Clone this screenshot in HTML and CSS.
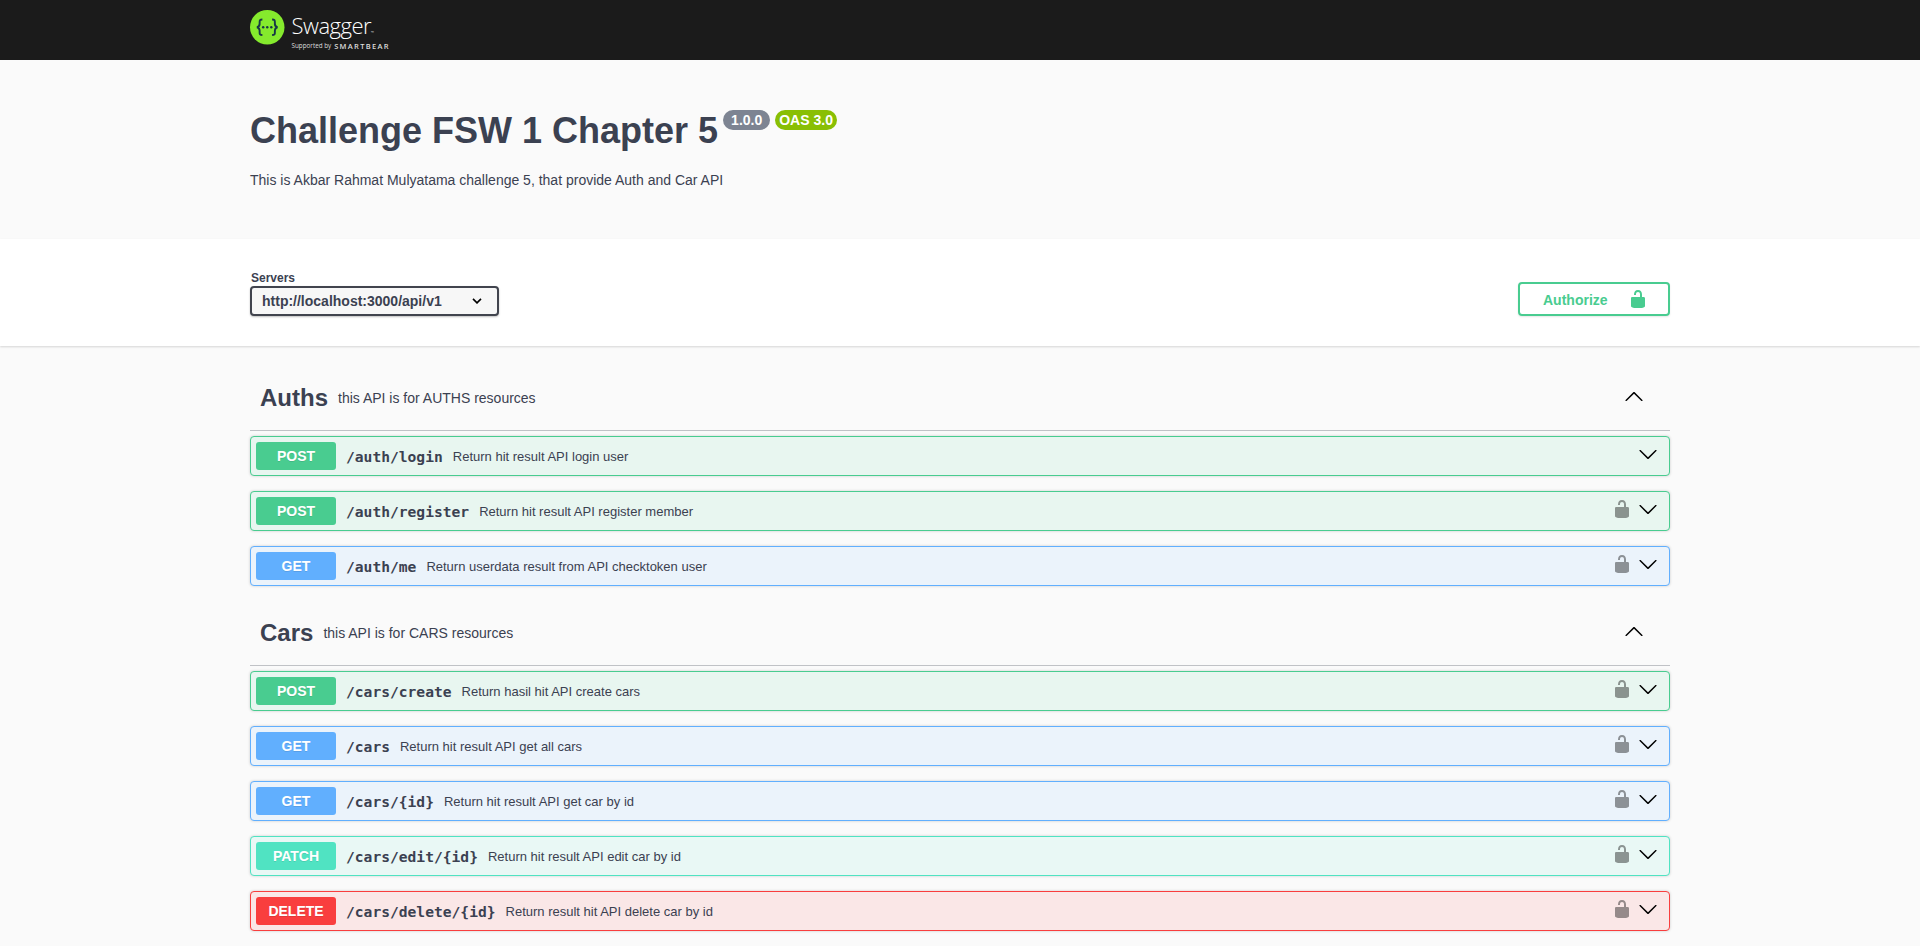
FILE: index.html
```html
<!DOCTYPE html>
<html lang="en">
<head>
<meta charset="utf-8">
<title>Swagger UI</title>
<link rel="stylesheet" href="styles.css">
</head>
<body>
<svg class="defs" width="0" height="0">
  <symbol id="unlocked" viewBox="0 0 20 20"><path d="M15.8 8H14V5.6C14 2.703 12.665 1 10 1 7.334 1 6 2.703 6 5.6V6h2v-.801C8 3.754 8.797 3 10 3c1.203 0 2 .754 2 2.199V8H4c-.553 0-1 .646-1 1.199V17c0 .549.428 1.139.951 1.307l1.197.387C5.672 18.861 6.55 19 7.1 19h5.8c.549 0 1.428-.139 1.951-.307l1.196-.387c.524-.167.953-.757.953-1.306V9.199C17 8.646 16.352 8 15.8 8z"/></symbol>
  <symbol id="arrow-down" viewBox="0 0 20 20"><path d="M17.418 6.109c.272-.268.709-.268.979 0s.271.701 0 .969l-7.908 7.83c-.27.268-.707.268-.979 0l-7.908-7.83c-.27-.268-.27-.701 0-.969.271-.268.709-.268.979 0L10 13.25l7.418-7.141z"/></symbol>
  <symbol id="arrow-up" viewBox="0 0 20 20"><path d="M17.418 14.908c.272.268.709.268.979 0s.271-.701 0-.969l-7.908-7.83c-.27-.268-.707-.268-.979 0l-7.908 7.83c-.27.268-.27.701 0 .969.271.268.709.268.979 0L10 7.767l7.418 7.141z"/></symbol>
</svg>
<header class="topbar">
  <div class="wrapper brand">
    <svg class="logo" viewBox="0 0 34 34">
      <circle cx="17" cy="17" r="17" fill="#85ea2d"/>
      <g fill="none" stroke="#173647" stroke-width="1.9">
        <path d="M12.2 9.400c-2.400 0-2.800.8-2.700 2.700.2 2.700.1 4.400-2.700 4.900 2.800.5 2.900 2.200 2.700 4.900-.1 1.900.3 2.700 2.700 2.700"/>
        <path d="M21.800 9.400c2.400 0 2.800.8 2.700 2.700-.2 2.700-.1 4.400 2.700 4.900-2.800.5-2.900 2.200-2.700 4.900.1 1.900-.3 2.700-2.700 2.700"/>
      </g>
      <g fill="#173647"><circle cx="13" cy="17" r="1.200"/><circle cx="17" cy="17" r="1.200"/><circle cx="21" cy="17" r="1.200"/></g>
    </svg>
    <div class="wordmark">
      <div class="name">Swagger<span class="tm">™</span></div>
      <div class="support">Supported by <b>SMARTBEAR</b></div>
    </div>
  </div>
</header>
<section class="wrapper info">
  <h1>Challenge FSW 1 Chapter 5 <span class="badges"><span class="badge">1.0.0</span><span class="badge oas">OAS 3.0</span></span></h1>
  <p>This is Akbar Rahmat Mulyatama challenge 5, that provide Auth and Car API</p>
</section>
<section class="schemes">
  <div class="wrapper scheme-row">
    <div>
      <div class="servers-label">Servers</div>
      <div class="select"><span>http://localhost:3000/api/v1</span><svg width="10" height="6" viewBox="0 0 10 6"><path d="M1 .9l4 4 4-4" fill="none" stroke="#000" stroke-width="1.600"/></svg></div>
    </div>
    <button class="authorize"><span>Authorize</span><svg class="lock"><use href="#unlocked"/></svg></button>
  </div>
</section>
<main class="wrapper">
  <section class="tag">
    <h3><span>Auths</span><small>this API is for AUTHS resources</small><svg class="arrow"><use href="#arrow-up"/></svg></h3>
    <div class="op post"><span class="method">POST</span><code>/auth/login</code><span class="desc">Return hit result API login user</span><svg class="arrow"><use href="#arrow-down"/></svg></div>
    <div class="op post"><span class="method">POST</span><code>/auth/register</code><span class="desc">Return hit result API register member</span><svg class="lock"><use href="#unlocked"/></svg><svg class="arrow"><use href="#arrow-down"/></svg></div>
    <div class="op get"><span class="method">GET</span><code>/auth/me</code><span class="desc">Return userdata result from API checktoken user</span><svg class="lock"><use href="#unlocked"/></svg><svg class="arrow"><use href="#arrow-down"/></svg></div>
  </section>
  <section class="tag">
    <h3><span>Cars</span><small>this API is for CARS resources</small><svg class="arrow"><use href="#arrow-up"/></svg></h3>
    <div class="op post"><span class="method">POST</span><code>/cars/create</code><span class="desc">Return hasil hit API create cars</span><svg class="lock"><use href="#unlocked"/></svg><svg class="arrow"><use href="#arrow-down"/></svg></div>
    <div class="op get"><span class="method">GET</span><code>/cars</code><span class="desc">Return hit result API get all cars</span><svg class="lock"><use href="#unlocked"/></svg><svg class="arrow"><use href="#arrow-down"/></svg></div>
    <div class="op get"><span class="method">GET</span><code>/cars/{id}</code><span class="desc">Return hit result API get car by id</span><svg class="lock"><use href="#unlocked"/></svg><svg class="arrow"><use href="#arrow-down"/></svg></div>
    <div class="op patch"><span class="method">PATCH</span><code>/cars/edit/{id}</code><span class="desc">Return hit result API edit car by id</span><svg class="lock"><use href="#unlocked"/></svg><svg class="arrow"><use href="#arrow-down"/></svg></div>
    <div class="op delete"><span class="method">DELETE</span><code>/cars/delete/{id}</code><span class="desc">Return result hit API delete car by id</span><svg class="lock"><use href="#unlocked"/></svg><svg class="arrow"><use href="#arrow-down"/></svg></div>
  </section>
</main>
</body>
</html>
```
FILE: styles.css
```css
* { box-sizing: border-box; }
html { overflow: hidden; }
body {
  margin: 0;
  height: 946px;
  background: #fafafa;
  color: #3b4151;
  font-family: "Liberation Sans", Arial, sans-serif;
}
.defs { display: block; width: 0; height: 0; }
.wrapper { width: 1460px; margin: 0 auto; padding: 0 20px; }

.topbar { height: 60px; background: #1b1b1b; }
.brand { display: flex; height: 60px; padding-top: 10px; color: #fff; }
.logo { width: 34.5px; height: 34.5px; }
.wordmark { margin-left: 7px; font-family: "Open Sans", sans-serif; }
.name { display: flex; align-items: flex-start; height: 32px; font-size: 22px; font-weight: 300; line-height: 31px; letter-spacing: -.5px; }
.tm { padding-top: 15px; font-size: 4px; line-height: 16px; letter-spacing: 0; }
.support { display: flex; gap: 3px; align-items: center; height: 8px; font-size: 6.300px; line-height: 8px; white-space: nowrap; color: #ddd; }
.support b { font-size: 7.500px; font-weight: 600; letter-spacing: 1.300px; }

.info { height: 179px; padding-top: 50px; }
.info h1 { display: flex; align-items: flex-start; margin: 0; font-size: 36px; line-height: 41px; }
.badges { display: flex; gap: 5px; margin-left: 5px; }
.badge { height: 20px; padding: 0 8px; border-radius: 57px; background: #7d8492; color: #fff; font-size: 14px; line-height: 20px; }
.badge.oas { padding: 0 4px; background: #89bf04; }
.info p { margin: 21px 0 0; font-size: 14px; line-height: 16px; }

.schemes { height: 107px; padding-top: 32px; background: #fff; box-shadow: 0 1px 2px rgba(0,0,0,.15); }
.scheme-row { display: flex; justify-content: space-between; align-items: flex-start; }
.servers-label { padding-left: 1px; font-size: 12px; font-weight: 700; line-height: 14px; }
.select {
  display: flex; justify-content: space-between; align-items: center;
  width: 249px; height: 30px; margin-top: 1px; padding: 0 15px 0 10px;
  border: 2px solid #41444e; border-radius: 4px; background: #f7f7f7;
  box-shadow: 0 1px 2px rgba(0,0,0,.25);
  font-size: 14px; font-weight: 700;
}
.authorize {
  display: flex; align-items: center; justify-content: space-between;
  width: 152px; height: 34px; margin-top: 11px; padding: 0 20px 0 23px;
  border: 2px solid #49cc90; border-radius: 4px; background: transparent;
  box-shadow: 0 1px 2px rgba(0,0,0,.1);
  color: #49cc90; font: 700 14px "Liberation Sans", Arial, sans-serif;
}
.authorize span { padding-top: 2px; }
.authorize .lock { fill: #49cc90; }
.lock { width: 20px; height: 20px; }
.arrow { width: 20px; height: 20px; margin-bottom: 4px; }

main.wrapper { padding-top: 20px; }
.tag h3 {
  display: flex; align-items: center; height: 65px; margin: 0 0 5px;
  padding: 0 26px 0 10px; border-bottom: 1px solid rgba(59,65,81,.3);
  font-size: 24px;
}
.tag h3 small { flex: 1; padding-left: 10px; font-size: 14px; font-weight: 400; }
.op {
  display: flex; align-items: center; height: 40px; margin-bottom: 15px;
  padding: 0 11px 0 5px; border: 1px solid; border-radius: 4px;
  box-shadow: 0 0 3px rgba(0,0,0,.19);
}
.method {
  width: 80px; height: 28px; border-radius: 3px; color: #fff;
  font-size: 14px; font-weight: 700; line-height: 28px; text-align: center;
  text-shadow: 0 1px 0 rgba(0,0,0,.1);
}
.op code { padding: 1px 10px 0; font: 700 14.610px "DejaVu Sans Mono", monospace; }
.desc { flex: 1; padding-top: 1px; font-size: 13px; }
.op .lock { margin: 0 6px 4px 0; fill: #000; opacity: .4; }
.op.post { border-color: #49cc90; background: #e8f6f0; }
.post .method { background: #49cc90; }
.op.get { border-color: #61affe; background: #ebf3fb; }
.get .method { background: #61affe; }
.op.patch { border-color: #50e3c2; background: #e9f8f5; }
.patch .method { background: #50e3c2; }
.op.delete { border-color: #f93e3e; background: #fae7e7; }
.delete .method { background: #f93e3e; }
```
